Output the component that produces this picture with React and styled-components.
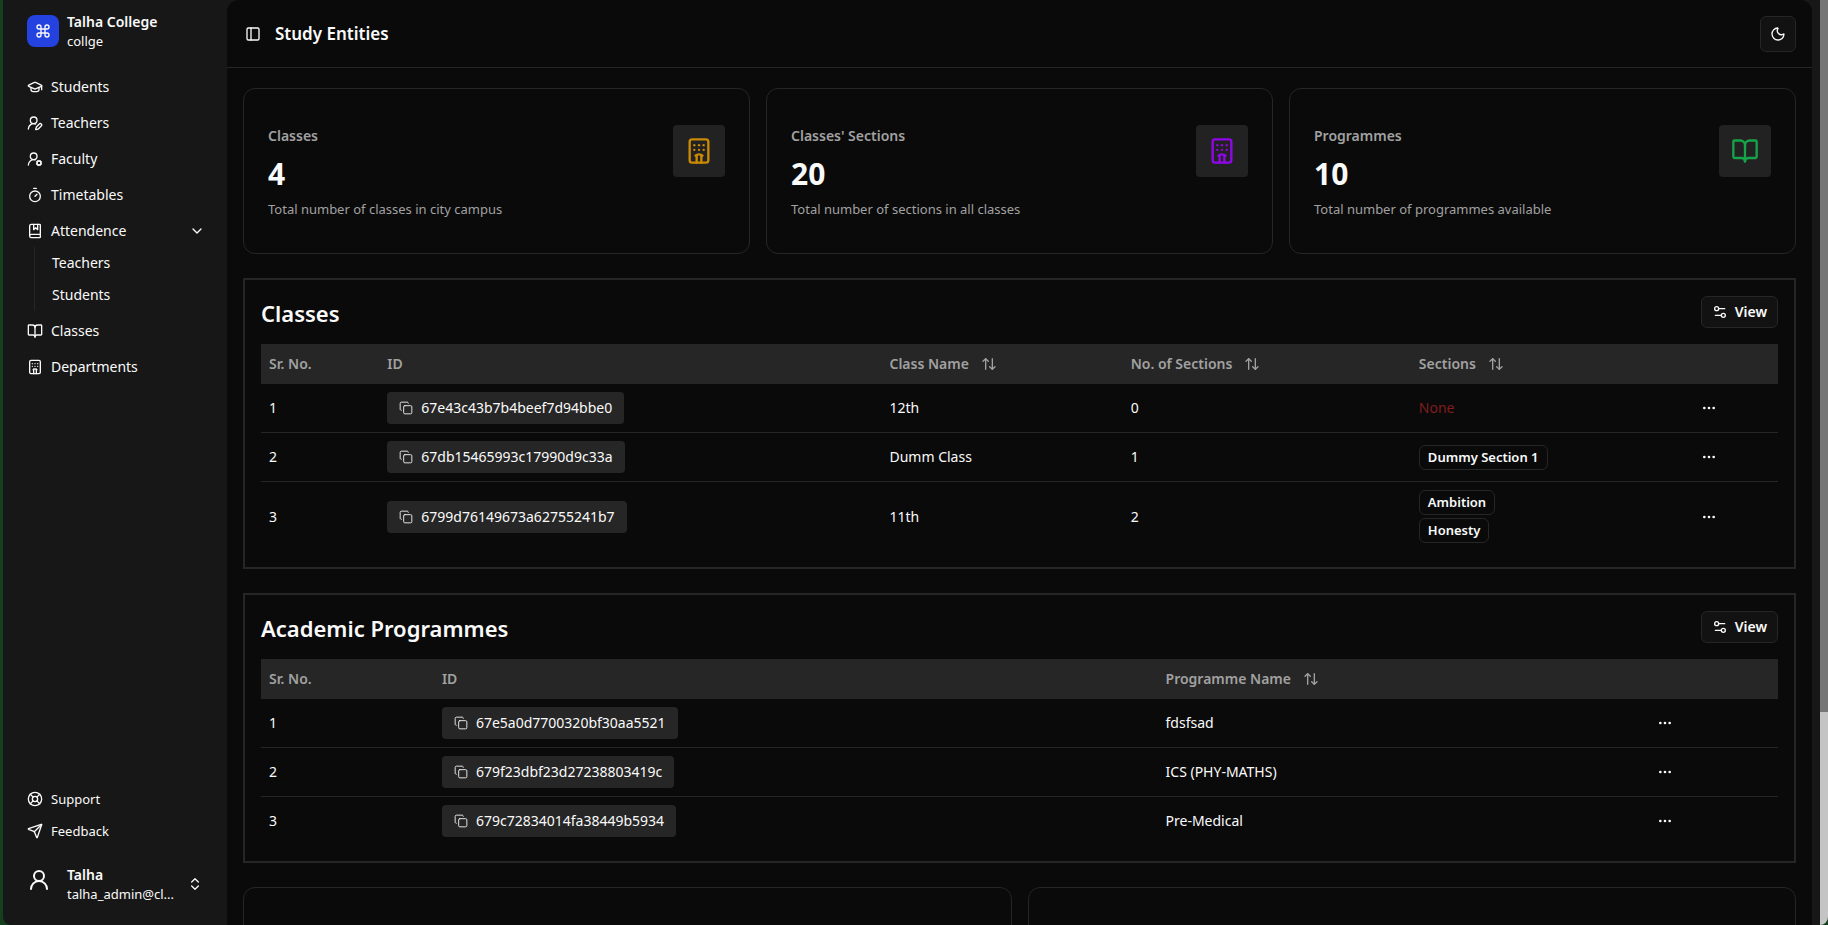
import React from "react";
import styled, { createGlobalStyle, css } from "styled-components";
import {
  ArrowUpDown,
  BookMarked,
  BookOpen,
  ChevronDown,
  ChevronsUpDown,
  Command,
  Copy,
  Ellipsis,
  GraduationCap,
  Hotel,
  LifeBuoy,
  Moon,
  PanelLeft,
  Send,
  Settings2,
  Timer,
  UserRound,
  UserRoundCog,
  UserRoundPen,
} from "lucide-react";

const color = {
  desktop: "#14401f",
  sidebar: "#171717",
  page: "#0a0a0a",
  raised: "#121212",
  border: "#262626",
  muted: "#262626",
  text: "#fafafa",
  dim: "#a1a1a1",
  primary: "#2442e0",
  danger: "#7f1d1d",
};

const GlobalStyle = createGlobalStyle`
  *, *::before, *::after { box-sizing: border-box; }
  body {
    margin: 0;
    background: ${color.desktop};
    color: ${color.text};
    font-family: "Noto Sans", "Open Sans", sans-serif;
    font-size: 14px;
    line-height: 20px;
  }
  h1, h2, p, ul { margin: 0; padding: 0; }
  ul { list-style: none; }
  button { font: inherit; color: inherit; cursor: pointer; }
  svg { flex-shrink: 0; }
`;

const Frame = styled.div`
  display: flex;
  height: 100vh;
  padding-left: 3px;
  overflow: hidden;
`;

const Shell = styled.div`
  display: flex;
  flex: 1;
  min-width: 0;
  background: ${color.sidebar};
  border-bottom-left-radius: 8px;
  overflow: hidden;
`;

const Scrollbar = styled.div`
  width: 8px;
  background: #c4c4c4;
  border-bottom-right-radius: 8px;
`;

const ScrollThumb = styled.div`
  height: 77%;
  background: #757575;
`;

const Sidebar = styled.aside`
  display: flex;
  flex-direction: column;
  flex: 0 0 224px;
  min-width: 0;
  padding: 8px;
`;

const plainButton = css`
  border: 0;
  background: none;
  text-align: left;
`;

const Brand = styled.a`
  display: flex;
  align-items: center;
  gap: 8px;
  height: 46px;
  padding: 0 16px;
  margin-bottom: 17px;
  color: inherit;
  text-decoration: none;
`;

const BrandMark = styled.span`
  display: grid;
  place-items: center;
  width: 32px;
  height: 32px;
  border-radius: 8px;
  background: ${color.primary};
`;

const Stack = styled.span`
  display: flex;
  flex-direction: column;
  flex: 1;
  min-width: 0;
  padding-top: 2px;
`;

const StackTitle = styled.span`
  font-weight: 600;
  line-height: 18px;
`;

const StackNote = styled.span`
  font-size: 13px;
  line-height: 20px;
  white-space: nowrap;
`;

const Menu = styled.ul`
  display: flex;
  flex-direction: column;
  gap: ${(p) => p.$gap}px;
  font-size: ${(p) => p.$size}px;
`;

const MenuLink = styled.a`
  display: flex;
  align-items: center;
  gap: 8px;
  height: ${(p) => (p.$small ? 28 : 32)}px;
  padding: 0 16px;
  color: inherit;
  text-decoration: none;
`;

const MenuToggle = styled.button`
  ${plainButton}
  display: flex;
  align-items: center;
  gap: 8px;
  width: 100%;
  height: 32px;
  padding: 0 14px 0 16px;

  svg:last-child {
    margin-left: auto;
  }
`;

const SubMenu = styled.ul`
  display: flex;
  flex-direction: column;
  gap: 4px;
  margin-left: 23px;
  padding: 2px 0;
  border-left: 1px solid ${color.border};
`;

const SubLink = styled.a`
  display: flex;
  align-items: center;
  height: 28px;
  padding-left: 17px;
  color: inherit;
  text-decoration: none;
`;

const SidebarFoot = styled.div`
  display: flex;
  flex-direction: column;
  gap: 15px;
  margin-top: auto;
`;

const Profile = styled.button`
  ${plainButton}
  display: flex;
  align-items: center;
  gap: 8px;
  width: 100%;
  height: 48px;
  margin-bottom: 9px;
  padding: 0 16px;
`;

const Avatar = styled.span`
  display: flex;
  width: 32px;
  height: 32px;
`;

const Main = styled.main`
  flex: 1;
  min-width: 0;
  margin-right: 8px;
  background: ${color.page};
  border-radius: 12px 12px 0 0;
  overflow: hidden;
`;

const Header = styled.header`
  display: flex;
  align-items: center;
  gap: 14px;
  height: 68px;
  padding: 0 16px 0 18px;
  border-bottom: 1px solid ${color.border};
`;

const IconButton = styled.button`
  ${plainButton}
  display: grid;
  place-items: center;
  width: ${(p) => p.$width}px;
  height: 32px;
  padding: 0;
`;

const ThemeButton = styled.button`
  display: grid;
  place-items: center;
  width: 36px;
  height: 36px;
  margin-left: auto;
  padding: 0;
  border: 1px solid ${color.border};
  border-radius: 6px;
  background: ${color.raised};
`;

const PageTitle = styled.h1`
  font-size: 17px;
  font-weight: 600;
  line-height: 24px;
`;

const Content = styled.div`
  display: flex;
  flex-direction: column;
  gap: 24px;
  padding: 20px 16px;
`;

const CardGrid = styled.div`
  display: grid;
  grid-template-columns: repeat(${(p) => p.$columns}, 1fr);
  gap: 16px;
`;

const Card = styled.section`
  display: flex;
  justify-content: space-between;
  min-height: 166px;
  padding: 36px 24px;
  border: 1px solid ${color.border};
  border-radius: 12px;
`;

const CardText = styled.div`
  padding-top: 1px;
`;

const CardLabel = styled.h2`
  color: ${color.dim};
  font-size: 14px;
  font-weight: 600;
  line-height: 20px;
`;

const CardValue = styled.p`
  margin: 8px 0;
  font-size: 30px;
  font-weight: 700;
  line-height: 39px;
`;

const CardNote = styled.p`
  color: ${color.dim};
  font-size: 13px;
  line-height: 16px;
`;

const CardIcon = styled.span`
  display: grid;
  place-items: center;
  width: 52px;
  height: 52px;
  border-radius: 4px;
  background: #222222;
  color: ${(p) => p.$tint};
`;

const Panel = styled.section`
  padding: 16px;
  border: 2px solid ${color.border};
`;

const PanelHead = styled.div`
  display: flex;
  align-items: flex-start;
  justify-content: space-between;
  height: 48px;
`;

const PanelTitle = styled.h2`
  font-size: 22px;
  font-weight: 600;
  line-height: 34px;
`;

const ViewButton = styled.button`
  display: flex;
  align-items: center;
  gap: 7px;
  height: 32px;
  padding: 0 10px;
  border: 1px solid ${color.border};
  border-radius: 6px;
  background: ${color.raised};
  font-weight: 600;
`;

const Table = styled.table`
  width: 100%;
  table-layout: fixed;
  border-collapse: collapse;

  thead tr {
    height: 40px;
    background: ${color.muted};
    color: ${color.dim};
  }

  th {
    padding: 0 8px;
    font-weight: 600;
    text-align: left;
  }

  td {
    padding: 8px;
  }

  tbody tr:not(:last-child) {
    box-shadow: inset 0 -1px ${color.border};
  }

  tbody tr:not(:last-child) td {
    padding-bottom: 9px;
  }
`;

const Column = styled.col`
  width: ${(p) => p.$share}%;
`;

const SortButton = styled.button`
  ${plainButton}
  display: flex;
  align-items: center;
  gap: 12px;
  padding: 0;
`;

const IdButton = styled.button`
  ${plainButton}
  display: flex;
  align-items: center;
  gap: 8px;
  height: 32px;
  padding: 0 12px;
  border-radius: 4px;
  background: ${color.muted};
`;

const BadgeList = styled.div`
  display: flex;
  flex-direction: column;
  align-items: flex-start;
  gap: 3px;
`;

const Badge = styled.span`
  height: 25px;
  padding: 0 8px;
  border: 1px solid ${color.border};
  border-radius: 6px;
  font-size: 13px;
  font-weight: 600;
  line-height: 23px;
`;

const Empty = styled.span`
  color: ${color.danger};
`;

const navTop = [
  ["Students", GraduationCap],
  ["Teachers", UserRoundPen],
  ["Faculty", UserRoundCog],
  ["Timetables", Timer],
];

const navBottom = [
  ["Classes", BookOpen],
  ["Departments", Hotel],
];

const navSupport = [
  ["Support", LifeBuoy],
  ["Feedback", Send],
];

const stats = [
  { label: "Classes", value: 4, note: "Total number of classes in city campus", Icon: Hotel, tint: "#ca8a04" },
  { label: "Classes' Sections", value: 20, note: "Total number of sections in all classes", Icon: Hotel, tint: "#9106e8" },
  { label: "Programmes", value: 10, note: "Total number of programmes available", Icon: BookOpen, tint: "#16a34a" },
];

const classes = [
  { id: "67e43c43b7b4beef7d94bbe0", name: "12th", sections: [] },
  { id: "67db15465993c17990d9c33a", name: "Dumm Class", sections: ["Dummy Section 1"] },
  { id: "6799d76149673a62755241b7", name: "11th", sections: ["Ambition", "Honesty"] },
];

const programmes = [
  { id: "67e5a0d7700320bf30aa5521", name: "fdsfsad" },
  { id: "679f23dbf23d27238803419c", name: "ICS (PHY-MATHS)" },
  { id: "679c72834014fa38449b5934", name: "Pre-Medical" },
];

function NavItems({ items, small }) {
  return items.map(([label, Icon]) => (
    <li key={label}>
      <MenuLink href="#" $small={small}>
        <Icon size={16} />
        {label}
      </MenuLink>
    </li>
  ));
}

function Sortable({ children }) {
  return (
    <SortButton type="button">
      {children}
      <ArrowUpDown size={16} />
    </SortButton>
  );
}

function CopyId({ id }) {
  return (
    <IdButton type="button">
      <Copy size={14} strokeWidth={1.5} />
      {id}
    </IdButton>
  );
}

function RowActions() {
  return (
    <IconButton type="button" aria-label="Row actions" $width={32}>
      <Ellipsis size={16} />
    </IconButton>
  );
}

function DataPanel({ title, shares, children }) {
  return (
    <Panel>
      <PanelHead>
        <PanelTitle>{title}</PanelTitle>
        <ViewButton type="button">
          <Settings2 size={16} />
          View
        </ViewButton>
      </PanelHead>
      <Table>
        <colgroup>
          {shares.map((share, i) => (
            <Column key={i} $share={share} />
          ))}
        </colgroup>
        {children}
      </Table>
    </Panel>
  );
}

export default function App() {
  return (
    <Frame>
      <GlobalStyle />
      <Shell>
        <Sidebar>
          <Brand href="#">
            <BrandMark>
              <Command size={16} />
            </BrandMark>
            <Stack>
              <StackTitle>Talha College</StackTitle>
              <StackNote>collge</StackNote>
            </Stack>
          </Brand>
          <nav>
            <Menu $gap={4} $size={14}>
              <NavItems items={navTop} />
              <li>
                <MenuToggle type="button" aria-expanded="true">
                  <BookMarked size={16} />
                  Attendence
                  <ChevronDown size={16} />
                </MenuToggle>
                <SubMenu>
                  <li><SubLink href="#">Teachers</SubLink></li>
                  <li><SubLink href="#">Students</SubLink></li>
                </SubMenu>
              </li>
              <NavItems items={navBottom} />
            </Menu>
          </nav>
          <SidebarFoot>
            <Menu $gap={4} $size={13}>
              <NavItems items={navSupport} small />
            </Menu>
            <Profile type="button">
              <Avatar>
                <UserRound size={24} />
              </Avatar>
              <Stack>
                <StackTitle>Talha</StackTitle>
                <StackNote>talha_admin@cl...</StackNote>
              </Stack>
              <ChevronsUpDown size={16} />
            </Profile>
          </SidebarFoot>
        </Sidebar>
        <Main>
          <Header>
            <IconButton type="button" aria-label="Toggle sidebar" $width={16}>
              <PanelLeft size={16} />
            </IconButton>
            <PageTitle>Study Entities</PageTitle>
            <ThemeButton type="button" aria-label="Toggle theme">
              <Moon size={16} />
            </ThemeButton>
          </Header>
          <Content>
            <CardGrid $columns={3}>
              {stats.map(({ label, value, note, Icon, tint }) => (
                <Card key={label}>
                  <CardText>
                    <CardLabel>{label}</CardLabel>
                    <CardValue>{value}</CardValue>
                    <CardNote>{note}</CardNote>
                  </CardText>
                  <CardIcon $tint={tint}>
                    <Icon size={28} />
                  </CardIcon>
                </Card>
              ))}
            </CardGrid>

            <DataPanel title="Classes" shares={[7.8, 33.1, 15.9, 19, 18.1, 6.1]}>
              <thead>
                <tr>
                  <th>Sr. No.</th>
                  <th>ID</th>
                  <th><Sortable>Class Name</Sortable></th>
                  <th><Sortable>No. of Sections</Sortable></th>
                  <th><Sortable>Sections</Sortable></th>
                  <th />
                </tr>
              </thead>
              <tbody>
                {classes.map(({ id, name, sections }, i) => (
                  <tr key={id}>
                    <td>{i + 1}</td>
                    <td><CopyId id={id} /></td>
                    <td>{name}</td>
                    <td>{sections.length}</td>
                    <td>
                      {sections.length === 0 ? (
                        <Empty>None</Empty>
                      ) : (
                        <BadgeList>
                          {sections.map((s) => (
                            <Badge key={s}>{s}</Badge>
                          ))}
                        </BadgeList>
                      )}
                    </td>
                    <td><RowActions /></td>
                  </tr>
                ))}
              </tbody>
            </DataPanel>

            <DataPanel title="Academic Programmes" shares={[11.4, 47.7, 31.9, 9]}>
              <thead>
                <tr>
                  <th>Sr. No.</th>
                  <th>ID</th>
                  <th><Sortable>Programme Name</Sortable></th>
                  <th />
                </tr>
              </thead>
              <tbody>
                {programmes.map(({ id, name }, i) => (
                  <tr key={id}>
                    <td>{i + 1}</td>
                    <td><CopyId id={id} /></td>
                    <td>{name}</td>
                    <td><RowActions /></td>
                  </tr>
                ))}
              </tbody>
            </DataPanel>

            <CardGrid $columns={2}>
              <Card />
              <Card />
            </CardGrid>
          </Content>
        </Main>
      </Shell>
      <Scrollbar>
        <ScrollThumb />
      </Scrollbar>
    </Frame>
  );
}
